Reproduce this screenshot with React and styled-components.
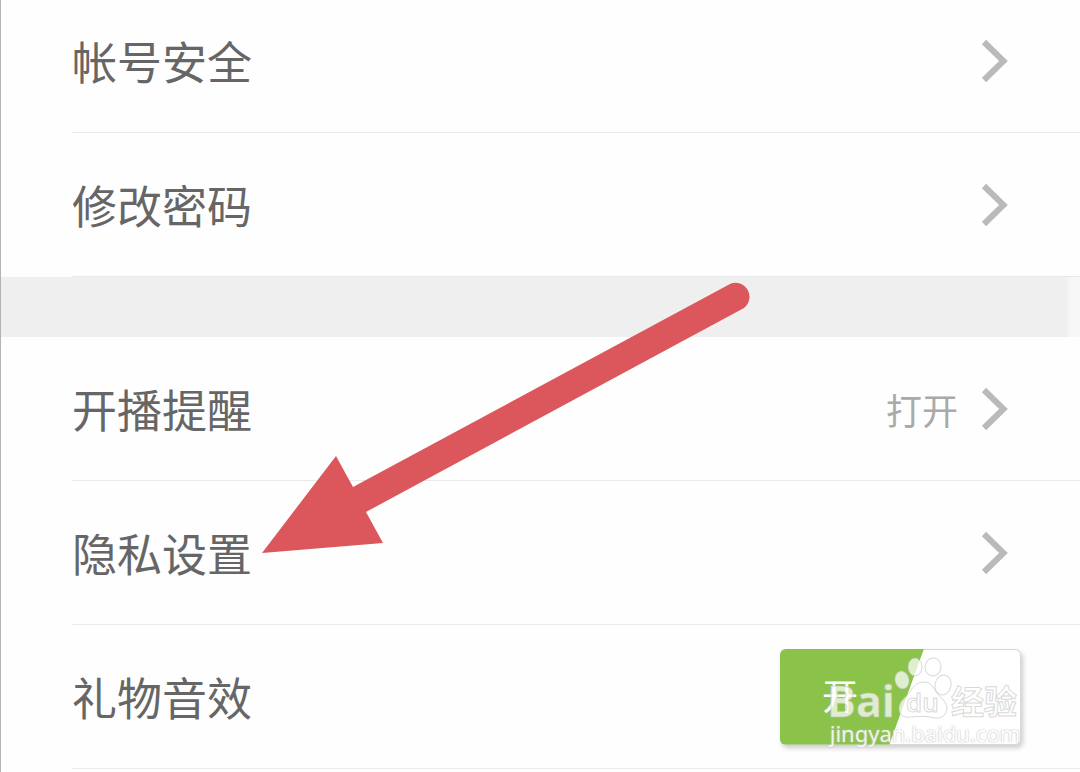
import React, { useState } from 'react'
import styled, { createGlobalStyle } from 'styled-components'

const GlobalStyle = createGlobalStyle`
  * {
    box-sizing: border-box;
  }
  body {
    margin: 0;
    background: #fefefe;
    overflow: hidden;
    font-family: "Noto Sans CJK SC", sans-serif;
  }
`;

const Page = styled.main`
  position: relative;
  min-height: 100vh;
  overflow: hidden;
  border-left: 1px solid #b4b4b4;
`;
// the list is scrolled a little, its first row is cut at the top
const Settings = styled.div`
  margin-top: -11px;
`;
const Group = styled.section``;
const Gap = styled.div`
  height: 60px;
  background: linear-gradient(to right, #efefef calc(100% - 14px), #f7f7f7 calc(100% - 9px));
`;
const Row = styled.div`
  display: flex;
  align-items: center;
  height: 144px;
  margin-left: 71px;
  padding-right: ${props => (props.$wide ? 59 : 72)}px;
  border-bottom: 1px solid #e9e9e9;
  color: #666;
  text-decoration: none;
`;
const Label = styled.span`
  flex: 1;
  font-size: 45px;
  line-height: 60px;
`;
const Value = styled.span`
  margin-right: 23px;
  color: #aaa;
  font-size: 36px;
  line-height: 48px;
`;
const Chevron = styled.svg`
  width: 27px;
  height: 44px;
  fill: none;
  stroke: #bababa;
  stroke-width: 6;
`;
const SwitchArea = styled.div`
  position: relative;
`;
const Toggle = styled.label`
  display: block;
  width: 241px;
  height: 96px;
  border-radius: 6px;
  background: #fff;
  box-shadow: inset 0 0 0 1px #d8d8d8, 2px 3px 5px rgba(0, 0, 0, 0.2);
  overflow: hidden;
  cursor: pointer;
`;
const ToggleInput = styled.input`
  position: absolute;
  opacity: 0;
`;
const ToggleSide = styled.span`
  display: flex;
  align-items: center;
  width: 144px;
  height: 96px;
  margin-left: ${props => (props.$on ? 0 : 97)}px;
  padding: 0 0 6px 42px;
  background: ${props => (props.$on ? '#8bc34a' : '#bbb')};
  clip-path: polygon(0 0, 100% 0, 76% 100%, 0 100%);
  color: #fff;
  font-size: 36px;
  line-height: 48px;
`;
const Watermark = styled.div`
  position: absolute;
  top: 8px;
  left: 46px;
  width: 198px;
  color: #fff;
  pointer-events: none;
`;
const Logo = styled.svg`
  display: block;
  width: 198px;
  height: 64px;
  overflow: visible;
  fill: rgba(255, 255, 255, 0.72);
  stroke: rgba(190, 190, 190, 0.6);
  stroke-width: 1;
`;
const Site = styled.div`
  font-family: "Noto Sans", sans-serif;
  font-size: 22px;
  line-height: 24px;
  text-align: center;
  white-space: nowrap;
  opacity: 0.85;
  text-shadow: 0 0 1px #aaa, 0 0 2px #ccc;
`;
const Pointer = styled.svg`
  position: absolute;
  top: 282px;
  left: 261px;
  width: 489px;
  height: 272px;
  pointer-events: none;
`;

const Arrow = () => (
  <Chevron viewBox="0 0 27 44" aria-hidden="true">
    <path d="M3 3 L22.5 22 L3 41" />
  </Chevron>
)

const LinkRow = ({ label, value }) => (
  <Row as="a" href="#">
    <Label>{label}</Label>
    {value && <Value>{value}</Value>}
    <Arrow />
  </Row>
)

const BaiduMark = () => (
  <Watermark>
    <Logo viewBox="0 0 198 64">
      <text x="1" y="60" fontFamily="Open Sans, sans-serif" fontSize="43" fontWeight="700">Bai</text>
      <ellipse cx="76" cy="23" rx="7" ry="9" transform="rotate(-12 76 23)" />
      <ellipse cx="89" cy="10" rx="7" ry="9" />
      <ellipse cx="107" cy="10" rx="8" ry="9" transform="rotate(8 107 10)" />
      <ellipse cx="117" cy="28" rx="8" ry="10" transform="rotate(12 117 28)" />
      <path d="M98 25 C90 25 87 30 84 35 C80 41 73 43 73 52 C73 58 78 61 85 60 C93 59 101 59 109 61 C116 62 121 57 121 51 C120 43 112 39 109 33 C106 28 103 25 98 25 Z" />
      <text x="80" y="55" fontFamily="Open Sans, sans-serif" fontSize="26" fontWeight="600">du</text>
      <text x="125" y="57" fontFamily="Noto Sans CJK SC, sans-serif" fontSize="33" fontWeight="700">经验</text>
    </Logo>
    <Site>jingyan.baidu.com</Site>
  </Watermark>
)

const App = () => {
  const [sound, setSound] = useState(true)

  return (
    <Page>
      <GlobalStyle />
      <Settings>
        <Group>
          <LinkRow label="帐号安全" />
          <LinkRow label="修改密码" />
        </Group>
        <Gap />
        <Group>
          <LinkRow label="开播提醒" value="打开" />
          <LinkRow label="隐私设置" />
          <Row $wide>
            <Label as="label" htmlFor="gift-sound">礼物音效</Label>
            <SwitchArea>
              <Toggle>
                <ToggleInput
                  id="gift-sound"
                  type="checkbox"
                  role="switch"
                  checked={sound}
                  onChange={() => setSound(!sound)}
                />
                <ToggleSide $on={sound}>{sound ? '开' : '关'}</ToggleSide>
              </Toggle>
              <BaiduMark />
            </SwitchArea>
          </Row>
        </Group>
      </Settings>
      <Pointer viewBox="262 282 489 272" fill="#db575c" aria-hidden="true">
        <path d="M262 553 L336 456 L353 487 L730 284 A14 14 0 0 1 744 308 L366 512 L383 543 Z" />
      </Pointer>
    </Page>
  )
}

export default App
